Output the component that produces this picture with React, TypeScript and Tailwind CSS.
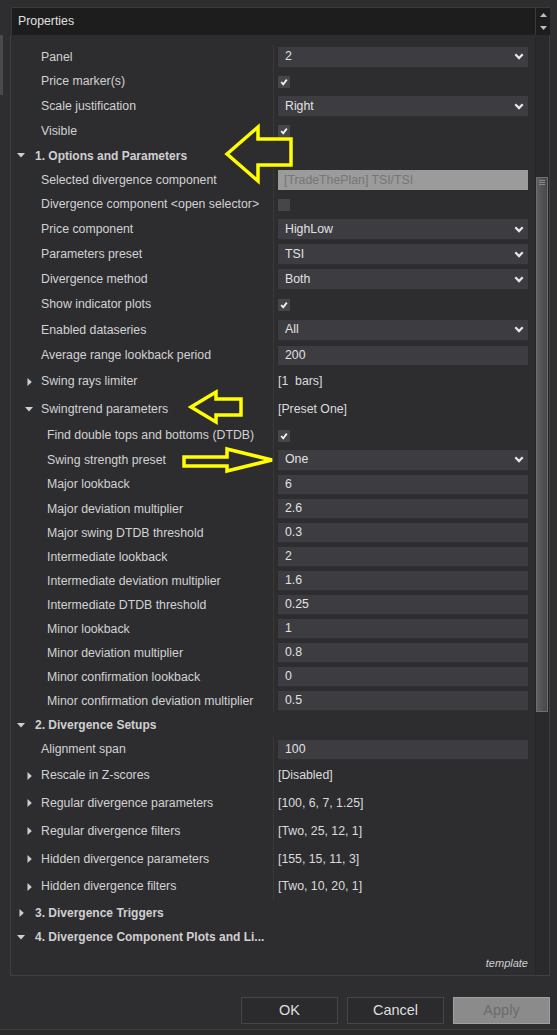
type Value =
  | { t: 'select'; v: string }
  | { t: 'check'; v: boolean }
  | { t: 'text'; v: string }
  | { t: 'disabled'; v: string }
  | { t: 'plain'; v: string };

type Row =
  | { kind: 'cat'; label: string; open: boolean; h: string }
  | { kind: 'prop'; label: string; level: 1 | 2; toggle?: 'open' | 'closed'; value: Value; h: string };

const rows: Row[] = [
  { kind: 'prop', label: 'Panel', level: 1, value: { t: 'select', v: '2' }, h: 'h-[24px]' },
  { kind: 'prop', label: 'Price marker(s)', level: 1, value: { t: 'check', v: true }, h: 'h-[25px]' },
  { kind: 'prop', label: 'Scale justification', level: 1, value: { t: 'select', v: 'Right' }, h: 'h-[25px]' },
  { kind: 'prop', label: 'Visible', level: 1, value: { t: 'check', v: true }, h: 'h-[24px]' },
  { kind: 'cat', label: '1. Options and Parameters', open: true, h: 'h-[25px]' },
  { kind: 'prop', label: 'Selected divergence component', level: 1, value: { t: 'disabled', v: '[TradeThePlan] TSI/TSI' }, h: 'h-[24px]' },
  { kind: 'prop', label: 'Divergence component <open selector>', level: 1, value: { t: 'check', v: false }, h: 'h-[25px]' },
  { kind: 'prop', label: 'Price component', level: 1, value: { t: 'select', v: 'HighLow' }, h: 'h-[25px]' },
  { kind: 'prop', label: 'Parameters preset', level: 1, value: { t: 'select', v: 'TSI' }, h: 'h-[25px]' },
  { kind: 'prop', label: 'Divergence method', level: 1, value: { t: 'select', v: 'Both' }, h: 'h-[25px]' },
  { kind: 'prop', label: 'Show indicator plots', level: 1, value: { t: 'check', v: true }, h: 'h-[25px]' },
  { kind: 'prop', label: 'Enabled dataseries', level: 1, value: { t: 'select', v: 'All' }, h: 'h-[26px]' },
  { kind: 'prop', label: 'Average range lookback period', level: 1, value: { t: 'text', v: '200' }, h: 'h-[25px]' },
  { kind: 'prop', label: 'Swing rays limiter', level: 1, toggle: 'closed', value: { t: 'plain', v: '[1  bars]' }, h: 'h-[27px]' },
  { kind: 'prop', label: 'Swingtrend parameters', level: 1, toggle: 'open', value: { t: 'plain', v: '[Preset One]' }, h: 'h-[28px]' },
  { kind: 'prop', label: 'Find double tops and bottoms (DTDB)', level: 2, value: { t: 'check', v: true }, h: 'h-[25px]' },
  { kind: 'prop', label: 'Swing strength preset', level: 2, value: { t: 'select', v: 'One' }, h: 'h-[24px]' },
  { kind: 'prop', label: 'Major lookback', level: 2, value: { t: 'text', v: '6' }, h: 'h-[25px]' },
  { kind: 'prop', label: 'Major deviation multiplier', level: 2, value: { t: 'text', v: '2.6' }, h: 'h-[24px]' },
  { kind: 'prop', label: 'Major swing DTDB threshold', level: 2, value: { t: 'text', v: '0.3' }, h: 'h-[24px]' },
  { kind: 'prop', label: 'Intermediate lookback', level: 2, value: { t: 'text', v: '2' }, h: 'h-[24px]' },
  { kind: 'prop', label: 'Intermediate deviation multiplier', level: 2, value: { t: 'text', v: '1.6' }, h: 'h-[24px]' },
  { kind: 'prop', label: 'Intermediate DTDB threshold', level: 2, value: { t: 'text', v: '0.25' }, h: 'h-[24px]' },
  { kind: 'prop', label: 'Minor lookback', level: 2, value: { t: 'text', v: '1' }, h: 'h-[24px]' },
  { kind: 'prop', label: 'Minor deviation multiplier', level: 2, value: { t: 'text', v: '0.8' }, h: 'h-[24px]' },
  { kind: 'prop', label: 'Minor confirmation lookback', level: 2, value: { t: 'text', v: '0' }, h: 'h-[24px]' },
  { kind: 'prop', label: 'Minor confirmation deviation multiplier', level: 2, value: { t: 'text', v: '0.5' }, h: 'h-[24px]' },
  { kind: 'cat', label: '2. Divergence Setups', open: true, h: 'h-[24px]' },
  { kind: 'prop', label: 'Alignment span', level: 1, value: { t: 'text', v: '100' }, h: 'h-[25px]' },
  { kind: 'prop', label: 'Rescale in Z-scores', level: 1, toggle: 'closed', value: { t: 'plain', v: '[Disabled]' }, h: 'h-[27px]' },
  { kind: 'prop', label: 'Regular divergence parameters', level: 1, toggle: 'closed', value: { t: 'plain', v: '[100, 6, 7, 1.25]' }, h: 'h-[28px]' },
  { kind: 'prop', label: 'Regular divergence filters', level: 1, toggle: 'closed', value: { t: 'plain', v: '[Two, 25, 12, 1]' }, h: 'h-[28px]' },
  { kind: 'prop', label: 'Hidden divergence parameters', level: 1, toggle: 'closed', value: { t: 'plain', v: '[155, 15, 11, 3]' }, h: 'h-[28px]' },
  { kind: 'prop', label: 'Hidden divergence filters', level: 1, toggle: 'closed', value: { t: 'plain', v: '[Two, 10, 20, 1]' }, h: 'h-[27px]' },
  { kind: 'cat', label: '3. Divergence Triggers', open: false, h: 'h-[25px]' },
  { kind: 'cat', label: '4. Divergence Component Plots and Li...', open: true, h: 'h-[24px]' },
];

function Triangle({ open }: { open: boolean }) {
  return open ? (
    <svg width="8" height="5" viewBox="0 0 8 5">
      <polygon points="0,0 8,0 4,4.5" fill="#cfcfcf" />
    </svg>
  ) : (
    <svg width="5" height="8" viewBox="0 0 5 8">
      <polygon points="0.5,0 4.8,4 0.5,8" fill="#cfcfcf" />
    </svg>
  );
}

function Chevron() {
  return (
    <svg width="10" height="7" viewBox="0 0 10 7" className="shrink-0">
      <polyline points="1.3,1.3 5,5 8.7,1.3" fill="none" stroke="#e6e6e6" strokeWidth="2.3" />
    </svg>
  );
}

function ValueCell({ value }: { value: Value }) {
  switch (value.t) {
    case 'select':
      return (
        <div className="flex h-[21px] w-[250px] items-center justify-between border-b border-[#303034] bg-[#3c3c41] pl-[7px] pr-[4px] text-[#e2e2e2]">
          <span>{value.v}</span>
          <Chevron />
        </div>
      );
    case 'text':
      return (
        <div className="flex h-[20px] w-[250px] items-center border-b border-[#303034] bg-[#3c3c41] pl-[7px] text-[#e2e2e2]">
          {value.v}
        </div>
      );
    case 'disabled':
      return (
        <div className="flex h-[20px] w-[250px] items-center bg-[#9b9b9b] pl-[6px] text-[#767676]">{value.v}</div>
      );
    case 'check':
      return (
        <div className="flex h-[12px] w-[12px] items-center justify-center bg-[#46464a]">
          {value.v && (
            <svg width="12" height="12" viewBox="0 0 12 12">
              <polyline points="3.2,6 5.2,8.3 8.8,3.6" fill="none" stroke="#f2f2f2" strokeWidth="1.8" />
            </svg>
          )}
        </div>
      );
    case 'plain':
      return <span className="whitespace-pre text-[#dcdcdc]">{value.v}</span>;
  }
}

function PropertyRow({ row }: { row: Row }) {
  if (row.kind === 'cat') {
    return (
      <div className={`flex items-center pl-[6px] ${row.h}`}>
        <div className="flex w-[8px] justify-center">
          <Triangle open={row.open} />
        </div>
        <span className="ml-[10px] whitespace-nowrap text-[12px] font-bold text-[#d0d0d0]">{row.label}</span>
      </div>
    );
  }
  return (
    <div className={`flex ${row.h}`}>
      <div
        className={`flex w-[263px] shrink-0 items-center border-r border-[#393939] ${
          row.level === 2 ? 'pl-[20px]' : 'pl-[14px]'
        }`}
      >
        <div className="flex w-[8px] justify-center">{row.toggle && <Triangle open={row.toggle === 'open'} />}</div>
        <span className="ml-[8px] whitespace-nowrap text-[#d2d2d2]">{row.label}</span>
      </div>
      <div className="flex flex-1 items-center pl-[4px]">
        <ValueCell value={row.value} />
      </div>
    </div>
  );
}

export default function App() {
  return (
    <div className="relative h-[1035px] w-[557px] overflow-hidden bg-[#2e2e30] text-[12.3px] font-['Liberation_Sans',Arial,sans-serif]">
      <div className="flex h-[1029px]">
        {/* left edge of the neighbouring pane */}
        <div className="flex w-[10px] shrink-0 flex-col">
          <div className="mt-[35px] h-[60px] w-[3px] bg-[#4a4a4c]" />
        </div>

        <div className="flex w-[540px] shrink-0 flex-col">
          {/* header */}
          <div className="mt-[7px] flex h-[28px]">
            <div className="ml-[1px] flex flex-1 items-center border-t border-l border-[#3a3a3a] bg-[#1d1d1d] pl-[6px] text-[#e0e0e0]">
              Properties
            </div>
            <div className="flex w-[15px] flex-col items-center justify-between border-t border-l border-[#3a3a3a] bg-[#1d1d1d] py-[5px]">
              <svg width="7" height="4" viewBox="0 0 7 4">
                <polygon points="0,4 7,4 3.5,0" fill="#bdbdbd" />
              </svg>
              <svg width="7" height="4" viewBox="0 0 7 4">
                <polygon points="0,0 7,0 3.5,4" fill="#bdbdbd" />
              </svg>
            </div>
          </div>

          {/* property grid */}
          <div className="flex h-[941px] border-x border-b border-[#3f3f41] bg-[#2d2d30]">
            <div className="flex flex-1 flex-col pt-[10px]">
              {rows.map((row, i) => (
                <PropertyRow key={i} row={row} />
              ))}
              <div className="mt-auto mb-[4px] flex h-[16px] items-center justify-end pr-[7px] text-[11px] italic text-[#d0d0d0]">
                template
              </div>
            </div>
            <div className="flex w-[14px] shrink-0 flex-col border-x border-[#262628] bg-[#2a2a2c]">
              <div className="mt-[142px] flex h-[535px] flex-col border border-[#6e6e6e] bg-gradient-to-r from-[#5e5e5e] to-[#474747]">
                <div className="mx-[2px] mt-[2px] flex flex-col gap-[1px]">
                  <div className="h-px bg-[#8a8a8a]" />
                  <div className="h-px bg-[#8a8a8a]" />
                  <div className="h-px bg-[#8a8a8a]" />
                </div>
              </div>
            </div>
          </div>

          {/* dialog buttons */}
          <div className="mt-[21px] flex justify-end gap-[9px] text-[14.5px]">
            <div className="flex h-[27px] w-[97px] items-center justify-center border border-[#464646] bg-[#2b2b2d] text-[#dedede]">
              OK
            </div>
            <div className="flex h-[27px] w-[97px] items-center justify-center border border-[#464646] bg-[#2b2b2d] text-[#dedede]">
              Cancel
            </div>
            <div className="flex h-[27px] w-[97px] items-center justify-center border border-[#a0a0a0] bg-[#8b8b8b] text-[#6c6c6c]">
              Apply
            </div>
          </div>
        </div>
      </div>
      <div className="h-[6px] border-t border-[#3c3c3c] bg-[#2a2a2a]" />

      {/* yellow call-out arrows drawn over the grid */}
      <svg className="pointer-events-none absolute inset-0" width="557" height="1035" viewBox="0 0 557 1035">
        <g fill="none" stroke="#ffff00" strokeWidth="3.5" strokeLinejoin="miter">
          <polygon points="227,154 258,127 258,139 291,139 291,165 258,165 258,181" />
          <polygon points="191,407 216,392 216,399 241,399 241,415 216,415 216,422" />
          <polygon points="184,457 227,457 227,449 272,460 227,471 227,466 184,466" />
        </g>
      </svg>
    </div>
  );
}
